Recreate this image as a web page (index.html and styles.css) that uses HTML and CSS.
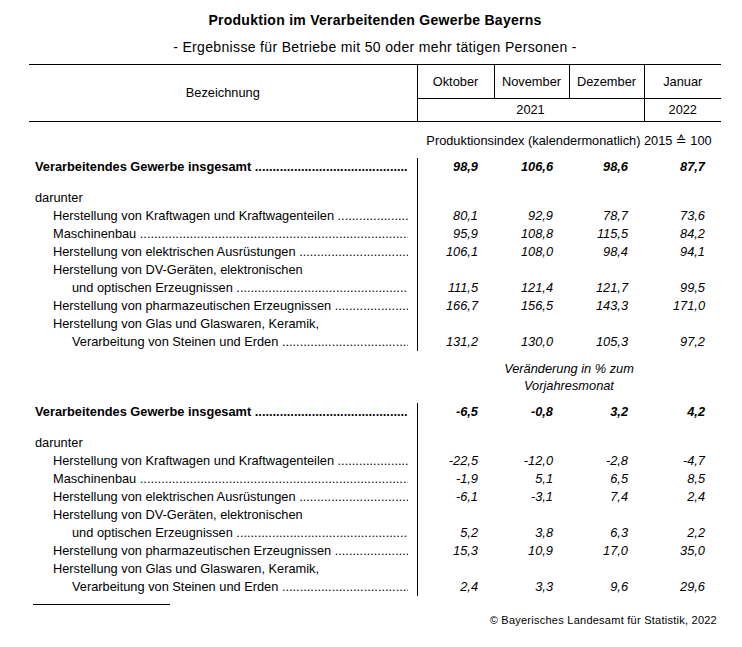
FILE: index.html
```html
<!DOCTYPE html>
<html lang="de">
<head>
<meta charset="utf-8">
<title>Produktion im Verarbeitenden Gewerbe Bayerns</title>
<link rel="stylesheet" href="styles.css">
</head>
<body>
<div class="page">
  <h1 class="title">Produktion im Verarbeitenden Gewerbe Bayerns</h1>
  <p class="subtitle">- Ergebnisse für Betriebe mit 50 oder mehr tätigen Personen -</p>
  <table class="data">
    <colgroup>
      <col class="c-label"><col class="c-v1"><col class="c-v2"><col class="c-v3"><col class="c-v4">
    </colgroup>
    <thead>
      <tr class="h-month">
        <th rowspan="2" class="h-label">Bezeichnung</th>
        <th class="h-m">Oktober</th>
        <th class="h-m">November</th>
        <th class="h-m">Dezember</th>
        <th class="h-m">Januar</th>
      </tr>
      <tr class="h-year">
        <th colspan="3" class="h-y">2021</th>
        <th class="h-y">2022</th>
      </tr>
    </thead>
    <tbody>
      <tr class="cap">
        <td></td>
        <td colspan="4" class="cap-text">Produktionsindex (kalendermonatlich) 2015 ≙ 100</td>
      </tr>
      <tr class="total">
        <td class="lab l0"><div class="lead">Verarbeitendes Gewerbe insgesamt</div></td>
        <td class="v">98,9</td><td class="v">106,6</td><td class="v">98,6</td><td class="v">87,7</td>
      </tr>
      <tr class="spacer"><td class="lab"></td><td colspan="4"></td></tr>
      <tr><td class="lab l0"><div>darunter</div></td><td colspan="4"></td></tr>
      <tr>
        <td class="lab l1"><div class="lead">Herstellung von Kraftwagen und Kraftwagenteilen</div></td>
        <td class="v">80,1</td><td class="v">92,9</td><td class="v">78,7</td><td class="v">73,6</td>
      </tr>
      <tr>
        <td class="lab l1"><div class="lead">Maschinenbau</div></td>
        <td class="v">95,9</td><td class="v">108,8</td><td class="v">115,5</td><td class="v">84,2</td>
      </tr>
      <tr>
        <td class="lab l1"><div class="lead">Herstellung von elektrischen Ausrüstungen</div></td>
        <td class="v">106,1</td><td class="v">108,0</td><td class="v">98,4</td><td class="v">94,1</td>
      </tr>
      <tr>
        <td class="lab l1"><div>Herstellung von DV-Geräten, elektronischen</div></td>
        <td colspan="4"></td>
      </tr>
      <tr>
        <td class="lab l2"><div class="lead">und optischen Erzeugnissen</div></td>
        <td class="v">111,5</td><td class="v">121,4</td><td class="v">121,7</td><td class="v">99,5</td>
      </tr>
      <tr>
        <td class="lab l1"><div class="lead">Herstellung von pharmazeutischen Erzeugnissen</div></td>
        <td class="v">166,7</td><td class="v">156,5</td><td class="v">143,3</td><td class="v">171,0</td>
      </tr>
      <tr>
        <td class="lab l1"><div>Herstellung von Glas und Glaswaren, Keramik,</div></td>
        <td colspan="4"></td>
      </tr>
      <tr>
        <td class="lab l2"><div class="lead">Verarbeitung von Steinen und Erden</div></td>
        <td class="v">131,2</td><td class="v">130,0</td><td class="v">105,3</td><td class="v">97,2</td>
      </tr>
    </tbody>
    <tbody>
      <tr class="cap cap2">
        <td></td>
        <td colspan="4" class="cap-text">Veränderung in % zum<br>Vorjahresmonat</td>
      </tr>
      <tr class="total">
        <td class="lab l0"><div class="lead">Verarbeitendes Gewerbe insgesamt</div></td>
        <td class="v">-6,5</td><td class="v">-0,8</td><td class="v">3,2</td><td class="v">4,2</td>
      </tr>
      <tr class="spacer"><td class="lab"></td><td colspan="4"></td></tr>
      <tr><td class="lab l0"><div>darunter</div></td><td colspan="4"></td></tr>
      <tr>
        <td class="lab l1"><div class="lead">Herstellung von Kraftwagen und Kraftwagenteilen</div></td>
        <td class="v">-22,5</td><td class="v">-12,0</td><td class="v">-2,8</td><td class="v">-4,7</td>
      </tr>
      <tr>
        <td class="lab l1"><div class="lead">Maschinenbau</div></td>
        <td class="v">-1,9</td><td class="v">5,1</td><td class="v">6,5</td><td class="v">8,5</td>
      </tr>
      <tr>
        <td class="lab l1"><div class="lead">Herstellung von elektrischen Ausrüstungen</div></td>
        <td class="v">-6,1</td><td class="v">-3,1</td><td class="v">7,4</td><td class="v">2,4</td>
      </tr>
      <tr>
        <td class="lab l1"><div>Herstellung von DV-Geräten, elektronischen</div></td>
        <td colspan="4"></td>
      </tr>
      <tr>
        <td class="lab l2"><div class="lead">und optischen Erzeugnissen</div></td>
        <td class="v">5,2</td><td class="v">3,8</td><td class="v">6,3</td><td class="v">2,2</td>
      </tr>
      <tr>
        <td class="lab l1"><div class="lead">Herstellung von pharmazeutischen Erzeugnissen</div></td>
        <td class="v">15,3</td><td class="v">10,9</td><td class="v">17,0</td><td class="v">35,0</td>
      </tr>
      <tr>
        <td class="lab l1"><div>Herstellung von Glas und Glaswaren, Keramik,</div></td>
        <td colspan="4"></td>
      </tr>
      <tr>
        <td class="lab l2"><div class="lead">Verarbeitung von Steinen und Erden</div></td>
        <td class="v">2,4</td><td class="v">3,3</td><td class="v">9,6</td><td class="v">29,6</td>
      </tr>
    </tbody>
  </table>
  <div class="footrule"></div>
  <p class="source">© Bayerisches Landesamt für Statistik, 2022</p>
</div>
</body>
</html>
```
FILE: styles.css
```css
html, body {
  margin: 0;
  padding: 0;
  background: #ffffff;
}

body {
  font-family: "Liberation Sans", Arial, "DejaVu Sans", sans-serif;
  font-size: 12.8px;
  color: #000000;
}

.page {
  width: 692px;
  margin-left: 29px;
  padding-top: 12px;
}

.title {
  margin: 0;
  font-size: 14px;
  line-height: 16px;
  font-weight: bold;
  letter-spacing: 0.27px;
  text-align: center;
}

.subtitle {
  margin: 11px 0 9px;
  font-size: 14px;
  line-height: 16px;
  letter-spacing: 0.34px;
  text-align: center;
}

.data {
  width: 692px;
  table-layout: fixed;
  border-collapse: collapse;
  border-spacing: 0;
}

.c-label { width: 388px; }
.c-v1 { width: 77px; }
.c-v2 { width: 75px; }
.c-v3 { width: 75px; }
.c-v4 { width: 77px; }

.data th,
.data td {
  padding: 0;
  font-size: 12.8px;
  line-height: 18px;
}

.data th {
  font-weight: normal;
  text-align: center;
  vertical-align: middle;
}

.data thead tr:first-child th {
  border-top: 1px solid #000;
}

.data thead .h-label {
  border-right: 1px solid #000;
  border-bottom: 1px solid #000;
}

.h-month th {
  height: 33px;
}

.h-m {
  border-left: 1px solid #000;
  border-bottom: 1px solid #000;
}

.h-y {
  height: 22px;
  border-left: 1px solid #000;
  border-bottom: 1px solid #000;
}

.data td {
  height: 18px;
  vertical-align: middle;
}

.cap td {
  height: 18px;
  padding-top: 10px;
  padding-bottom: 8px;
}

.cap2 td {
  height: 34px;
  padding-top: 9px;
  padding-bottom: 9px;
  line-height: 17px;
}

.cap2 .cap-text {
  font-style: italic;
}

.cap-text {
  text-align: center;
}

.data td.lab {
  border-right: 1px solid #000;
  padding-left: 6px;
  padding-right: 9px;
}

.data td.lab div {
  white-space: nowrap;
  overflow: hidden;
}

.lead::after {
  content: " .........................................................................................................................................";
}

.data td.l1 { padding-left: 24px; }
.data td.l2 { padding-left: 43px; }

.spacer td {
  height: 13px;
  line-height: 13px;
}

.data td.v {
  text-align: right;
  font-style: italic;
  padding-right: 16px;
}

.total td {
  font-weight: bold;
}

.footrule {
  width: 137px;
  height: 1px;
  margin: 8px 0 0 4px;
  background: #000;
}

.source {
  margin: 8px 4px 0 0;
  font-size: 11px;
  line-height: 14px;
  letter-spacing: 0.25px;
  text-align: right;
}
```
